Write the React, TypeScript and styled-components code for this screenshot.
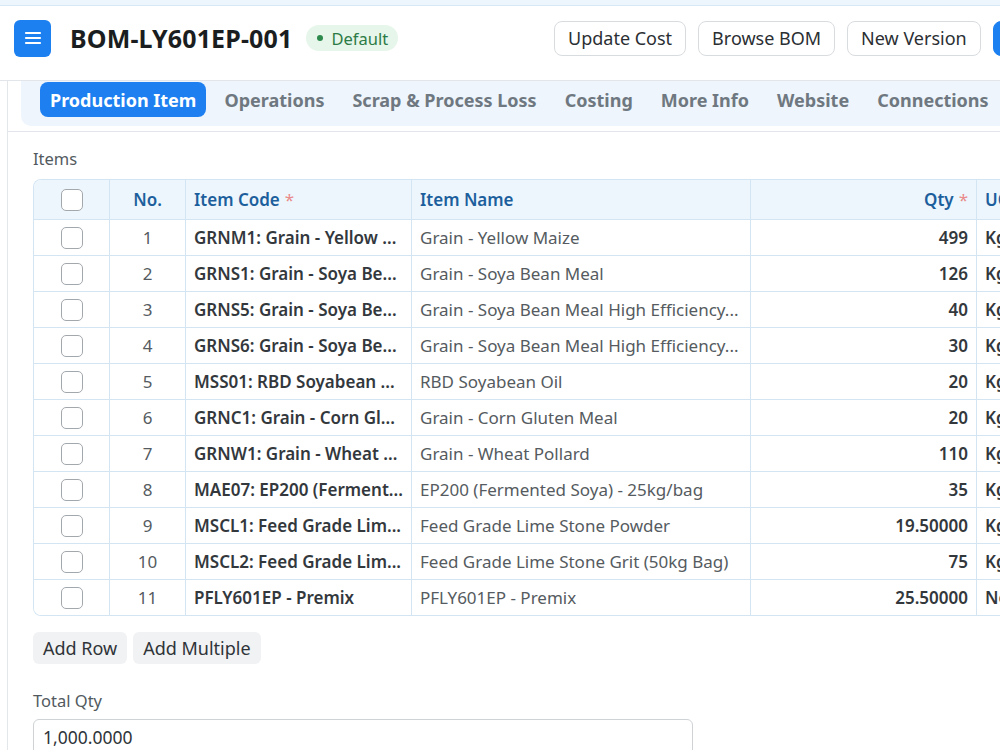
import React from "react";
import styled, { createGlobalStyle } from "styled-components";

const Global = createGlobalStyle`
  html, body { margin: 0; padding: 0; background: #fff; }
  body { font-family: "Noto Sans", "Open Sans", sans-serif; color: #1f272e; overflow: hidden; width: 1000px; }
  * { box-sizing: border-box; }
`;

const TopStrip = styled.div`
  height: 6px;
  background: #eef6fd;
  border-bottom: 1px solid #d6e7f5;
`;

const Header = styled.header`
  height: 75px;
  display: flex;
  align-items: center;
  padding: 0 0 10px 14px;
  border-bottom: 1px solid #e2e6ea;
  overflow: hidden;
  white-space: nowrap;
`;

const MenuButton = styled.div`
  width: 37px;
  height: 37px;
  border-radius: 6px;
  background: #1d80f0;
  display: flex;
  align-items: center;
  justify-content: center;
  flex-shrink: 0;
`;

const Title = styled.h1`
  margin: 0 0 0 19px;
  font-size: 25px;
  font-weight: 700;
  color: #1b1e21;
  letter-spacing: 0.15px;
`;

const Badge = styled.span`
  margin-left: 14px;
  display: inline-flex;
  align-items: center;
  gap: 8px;
  height: 26px;
  padding: 0 10px 0 11px;
  border-radius: 13px;
  background: #e6f6ea;
  color: #2c7b46;
  font-size: 16.5px;
  &::before {
    content: "";
    width: 6px;
    height: 6px;
    border-radius: 50%;
    background: #2c8a4c;
  }
`;

const Actions = styled.div`
  margin-left: auto;
  display: flex;
  gap: 12px;
  align-items: center;
  margin-right: -60px;
`;

const ActionButton = styled.button<{ $primary?: boolean }>`
  height: 35px;
  padding: 0 13px;
  border-radius: 8px;
  border: 1px solid ${(p) => (p.$primary ? "#1d80f0" : "#d9dcdf")};
  background: ${(p) => (p.$primary ? "#1d80f0" : "#fff")};
  color: ${(p) => (p.$primary ? "#fff" : "#2b2f33")};
  font-family: inherit;
  font-size: 18px;
  white-space: nowrap;
`;

const Page = styled.div`
  margin-left: 7px;
  border-left: 1px solid #e4e7ea;
  min-height: 700px;
`;

const TabSection = styled.div`
  padding: 0 0 5px 13px;
  border-bottom: 1px solid #e2e6ea;
`;

const TabStrip = styled.nav`
  display: flex;
  gap: 8px;
  padding: 1px 0 9px 19px;
  background: #eef5fc;
  border-bottom-left-radius: 10px;
  white-space: nowrap;
  overflow: hidden;
`;

const Tab = styled.div<{ $active?: boolean }>`
  height: 35px;
  padding: 0 10px;
  display: flex;
  align-items: center;
  border-radius: 8px;
  font-size: 18px;
  font-weight: 700;
  background: ${(p) => (p.$active ? "#1d7ff0" : "transparent")};
  color: ${(p) => (p.$active ? "#fff" : "#6f7880")};
`;

const Content = styled.div`
  padding: 16px 0 0 25px;
`;

const Label = styled.div`
  font-size: 16.5px;
  color: #525a60;
  margin-bottom: 9px;
  line-height: 22px;
`;

const Table = styled.div`
  width: 1000px;
  border: 1px solid #d3e4f2;
  border-right: none;
  border-radius: 8px 0 0 8px;
  overflow: hidden;
`;

const Row = styled.div<{ $head?: boolean }>`
  display: grid;
  grid-template-columns: 75px 76px 226px 339px 226px 120px;
  height: ${(p) => (p.$head ? "39px" : "36px")};
  background: ${(p) => (p.$head ? "#eef6fd" : "#fff")};
  border-top: ${(p) => (p.$head ? "none" : "1px solid #d3e4f2")};
`;

const Cell = styled.div<{ $align?: "left" | "center" | "right"; $bold?: boolean; $head?: boolean }>`
  display: flex;
  align-items: center;
  justify-content: ${(p) =>
    p.$align === "center" ? "center" : p.$align === "right" ? "flex-end" : "flex-start"};
  padding: 0 8px;
  border-left: 1px solid #d3e4f2;
  &:first-child { border-left: none; }
  font-size: 17px;
  white-space: nowrap;
  overflow: hidden;
  font-weight: ${(p) => (p.$bold || p.$head ? 600 : 400)};
  color: ${(p) => (p.$head ? "#1c5f9c" : p.$bold ? "#33383d" : "#555b60")};
`;

const Req = styled.span`
  color: #e98b8b;
  margin-left: 5px;
  font-weight: 400;
`;

const Check = styled.span`
  width: 22px;
  height: 22px;
  border: 1px solid #a3a8ad;
  border-radius: 5px;
  background: #fff;
`;

const ButtonRow = styled.div`
  display: flex;
  gap: 6px;
  margin-top: 16px;
`;

const GrayButton = styled.button`
  height: 32px;
  padding: 0 10px;
  border: none;
  border-radius: 6px;
  background: #f1f2f3;
  color: #2f3439;
  font-family: inherit;
  font-size: 18px;
`;

const FieldLabel = styled(Label)`
  margin-top: 26px;
  margin-bottom: 7px;
`;

const Input = styled.div`
  width: 660px;
  height: 40px;
  border: 1px solid #cfd3d6;
  border-radius: 6px;
  padding: 5px 9px;
  font-size: 17.5px;
  color: #2f3439;
`;

const rows = [
  ["GRNM1: Grain - Yellow ...", "Grain - Yellow Maize", "499", "Kg"],
  ["GRNS1: Grain - Soya Be...", "Grain - Soya Bean Meal", "126", "Kg"],
  ["GRNS5: Grain - Soya Be...", "Grain - Soya Bean Meal High Efficiency...", "40", "Kg"],
  ["GRNS6: Grain - Soya Be...", "Grain - Soya Bean Meal High Efficiency...", "30", "Kg"],
  ["MSS01: RBD Soyabean ...", "RBD Soyabean Oil", "20", "Kg"],
  ["GRNC1: Grain - Corn Gl...", "Grain - Corn Gluten Meal", "20", "Kg"],
  ["GRNW1: Grain - Wheat ...", "Grain - Wheat Pollard", "110", "Kg"],
  ["MAE07: EP200 (Ferment...", "EP200 (Fermented Soya) - 25kg/bag", "35", "Kg"],
  ["MSCL1: Feed Grade Lim...", "Feed Grade Lime Stone Powder", "19.50000", "Kg"],
  ["MSCL2: Feed Grade Lim...", "Feed Grade Lime Stone Grit (50kg Bag)", "75", "Kg"],
  ["PFLY601EP - Premix", "PFLY601EP - Premix", "25.50000", "Nos"],
];

const tabs = [
  "Production Item",
  "Operations",
  "Scrap & Process Loss",
  "Costing",
  "More Info",
  "Website",
  "Connections",
];

export default function App() {
  return (
    <>
      <Global />
      <TopStrip />
      <Header>
        <MenuButton>
          <svg width="18" height="16" viewBox="0 0 18 16">
            <path d="M2 3h14M2 8h14M2 13h14" stroke="#fff" strokeWidth="2.2" strokeLinecap="round" />
          </svg>
        </MenuButton>
        <Title>BOM-LY601EP-001</Title>
        <Badge>Default</Badge>
        <Actions>
          <ActionButton>Update Cost</ActionButton>
          <ActionButton>Browse BOM</ActionButton>
          <ActionButton>New Version</ActionButton>
          <ActionButton $primary>Save</ActionButton>
        </Actions>
      </Header>
      <Page>
        <TabSection>
          <TabStrip>
            {tabs.map((t, i) => (
              <Tab key={t} $active={i === 0}>
                {t}
              </Tab>
            ))}
          </TabStrip>
        </TabSection>
        <Content>
          <Label>Items</Label>
          <Table>
            <Row $head>
              <Cell $align="center">
                <Check />
              </Cell>
              <Cell $head $align="center">No.</Cell>
              <Cell $head>
                Item Code<Req>*</Req>
              </Cell>
              <Cell $head>Item Name</Cell>
              <Cell $head $align="right">
                Qty<Req>*</Req>
              </Cell>
              <Cell $head>UOM</Cell>
            </Row>
            {rows.map((r, i) => (
              <Row key={i}>
                <Cell $align="center">
                  <Check />
                </Cell>
                <Cell $align="center">{i + 1}</Cell>
                <Cell $bold>{r[0]}</Cell>
                <Cell>{r[1]}</Cell>
                <Cell $bold $align="right">{r[2]}</Cell>
                <Cell $bold>{r[3]}</Cell>
              </Row>
            ))}
          </Table>
          <ButtonRow>
            <GrayButton>Add Row</GrayButton>
            <GrayButton>Add Multiple</GrayButton>
          </ButtonRow>
          <FieldLabel>Total Qty</FieldLabel>
          <Input>1,000.0000</Input>
        </Content>
      </Page>
    </>
  );
}
